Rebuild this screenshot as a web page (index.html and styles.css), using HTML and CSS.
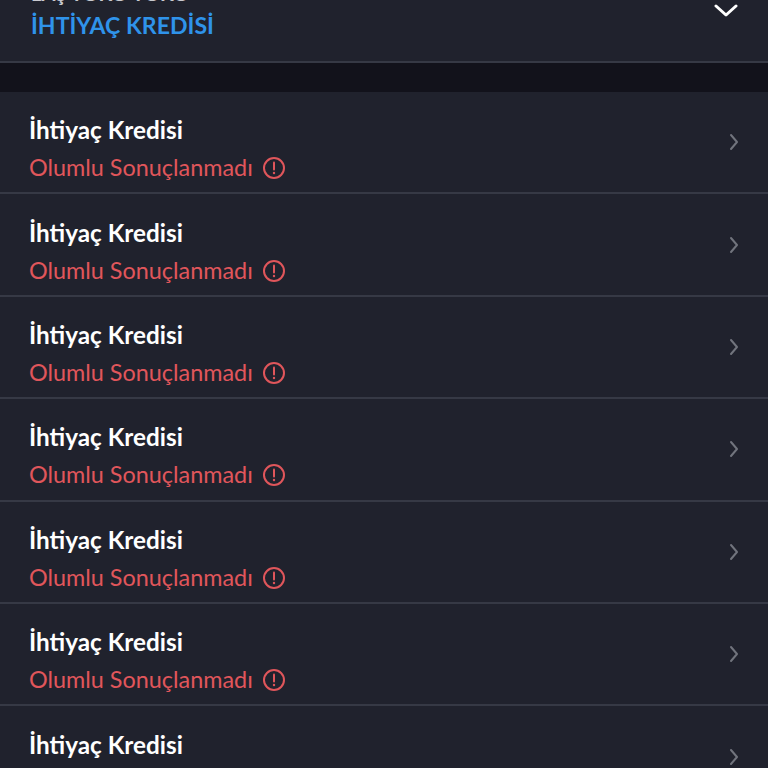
FILE: index.html
```html
<!DOCTYPE html>
<html lang="en">
<head>
  <meta charset="UTF-8">
  <title>Başvurularım</title>
  <link rel="stylesheet" href="styles.css">
</head>
<body>

<div class="screen">
  <div class="filter">
    <div class="filter-text">
      <div class="filter-label">LAŞ YOKO YOKO</div>
      <div class="filter-value">İHTİYAÇ KREDİSİ</div>
    </div>
    <svg class="filter-arrow" width="24" height="14" viewBox="0 0 24 14"><path d="M2 2l10 9 10-9" fill="none" stroke="#fff" stroke-width="3" stroke-linecap="round" stroke-linejoin="round"/></svg>
  </div>
  <div class="band"></div>

  <div class="row">
    <div class="row-text">
      <div class="row-title">İhtiyaç Kredisi</div>
      <div class="row-status">Olumlu Sonuçlanmadı
        <svg class="status-icon" width="24" height="24" viewBox="0 0 24 24"><circle cx="12" cy="12" r="10" fill="none" stroke="#e0565b" stroke-width="2"/><path d="M12 6.5v7" stroke="#e0565b" stroke-width="2" stroke-linecap="round"/><circle cx="12" cy="17" r="1.2" fill="#e0565b"/></svg>
      </div>
    </div>
    <svg class="chevron" width="10" height="18" viewBox="0 0 10 18"><path d="M2 2l6 7-6 7" fill="none" stroke="#71747d" stroke-width="2" stroke-linecap="round" stroke-linejoin="round"/></svg>
  </div>
  <div class="row">
    <div class="row-text">
      <div class="row-title">İhtiyaç Kredisi</div>
      <div class="row-status">Olumlu Sonuçlanmadı
        <svg class="status-icon" width="24" height="24" viewBox="0 0 24 24"><circle cx="12" cy="12" r="10" fill="none" stroke="#e0565b" stroke-width="2"/><path d="M12 6.5v7" stroke="#e0565b" stroke-width="2" stroke-linecap="round"/><circle cx="12" cy="17" r="1.2" fill="#e0565b"/></svg>
      </div>
    </div>
    <svg class="chevron" width="10" height="18" viewBox="0 0 10 18"><path d="M2 2l6 7-6 7" fill="none" stroke="#71747d" stroke-width="2" stroke-linecap="round" stroke-linejoin="round"/></svg>
  </div>
  <div class="row">
    <div class="row-text">
      <div class="row-title">İhtiyaç Kredisi</div>
      <div class="row-status">Olumlu Sonuçlanmadı
        <svg class="status-icon" width="24" height="24" viewBox="0 0 24 24"><circle cx="12" cy="12" r="10" fill="none" stroke="#e0565b" stroke-width="2"/><path d="M12 6.5v7" stroke="#e0565b" stroke-width="2" stroke-linecap="round"/><circle cx="12" cy="17" r="1.2" fill="#e0565b"/></svg>
      </div>
    </div>
    <svg class="chevron" width="10" height="18" viewBox="0 0 10 18"><path d="M2 2l6 7-6 7" fill="none" stroke="#71747d" stroke-width="2" stroke-linecap="round" stroke-linejoin="round"/></svg>
  </div>
  <div class="row">
    <div class="row-text">
      <div class="row-title">İhtiyaç Kredisi</div>
      <div class="row-status">Olumlu Sonuçlanmadı
        <svg class="status-icon" width="24" height="24" viewBox="0 0 24 24"><circle cx="12" cy="12" r="10" fill="none" stroke="#e0565b" stroke-width="2"/><path d="M12 6.5v7" stroke="#e0565b" stroke-width="2" stroke-linecap="round"/><circle cx="12" cy="17" r="1.2" fill="#e0565b"/></svg>
      </div>
    </div>
    <svg class="chevron" width="10" height="18" viewBox="0 0 10 18"><path d="M2 2l6 7-6 7" fill="none" stroke="#71747d" stroke-width="2" stroke-linecap="round" stroke-linejoin="round"/></svg>
  </div>
  <div class="row">
    <div class="row-text">
      <div class="row-title">İhtiyaç Kredisi</div>
      <div class="row-status">Olumlu Sonuçlanmadı
        <svg class="status-icon" width="24" height="24" viewBox="0 0 24 24"><circle cx="12" cy="12" r="10" fill="none" stroke="#e0565b" stroke-width="2"/><path d="M12 6.5v7" stroke="#e0565b" stroke-width="2" stroke-linecap="round"/><circle cx="12" cy="17" r="1.2" fill="#e0565b"/></svg>
      </div>
    </div>
    <svg class="chevron" width="10" height="18" viewBox="0 0 10 18"><path d="M2 2l6 7-6 7" fill="none" stroke="#71747d" stroke-width="2" stroke-linecap="round" stroke-linejoin="round"/></svg>
  </div>
  <div class="row">
    <div class="row-text">
      <div class="row-title">İhtiyaç Kredisi</div>
      <div class="row-status">Olumlu Sonuçlanmadı
        <svg class="status-icon" width="24" height="24" viewBox="0 0 24 24"><circle cx="12" cy="12" r="10" fill="none" stroke="#e0565b" stroke-width="2"/><path d="M12 6.5v7" stroke="#e0565b" stroke-width="2" stroke-linecap="round"/><circle cx="12" cy="17" r="1.2" fill="#e0565b"/></svg>
      </div>
    </div>
    <svg class="chevron" width="10" height="18" viewBox="0 0 10 18"><path d="M2 2l6 7-6 7" fill="none" stroke="#71747d" stroke-width="2" stroke-linecap="round" stroke-linejoin="round"/></svg>
  </div>
  <div class="row">
    <div class="row-text">
      <div class="row-title">İhtiyaç Kredisi</div>
      <div class="row-status">Olumlu Sonuçlanmadı
        <svg class="status-icon" width="24" height="24" viewBox="0 0 24 24"><circle cx="12" cy="12" r="10" fill="none" stroke="#e0565b" stroke-width="2"/><path d="M12 6.5v7" stroke="#e0565b" stroke-width="2" stroke-linecap="round"/><circle cx="12" cy="17" r="1.2" fill="#e0565b"/></svg>
      </div>
    </div>
    <svg class="chevron" width="10" height="18" viewBox="0 0 10 18"><path d="M2 2l6 7-6 7" fill="none" stroke="#71747d" stroke-width="2" stroke-linecap="round" stroke-linejoin="round"/></svg>
  </div>
</div>

</body>
</html>
```

FILE: styles.css
```css
html, body {
  margin: 0;
  height: 768px;
  overflow: hidden;
  background-color: #20222d;
}
.screen {
  margin-top: -30px;
  font-family: Lato, sans-serif;
}
.filter {
  display: flex;
  justify-content: space-between;
  align-items: flex-start;
  height: 93px;
  padding: 9px 30px 0 31px;
  box-sizing: border-box;
  border-bottom: 2px solid #363945;
}
.filter-label {
  color: #c9cad0;
  font-size: 20px;
  font-weight: 700;
  line-height: 28px;
  margin-bottom: 3px;
}
.filter-value {
  color: #2f93ea;
  font-size: 23.1px;
  font-weight: 700;
  line-height: 30px;
}
.filter-arrow {
  margin-top: 25px;
}
.band {
  height: 29px;
  background-color: #12121b;
}
.row {
  display: flex;
  justify-content: space-between;
  align-items: center;
  height: 102.4px;
  padding: 0 29px;
  box-sizing: border-box;
  border-bottom: 2px solid #363945;
}
.row-text {
  padding-top: 12px;
}
.row-title {
  color: #fff;
  font-size: 24.3px;
  font-weight: 700;
  line-height: 30px;
  margin-bottom: 8px;
}
.row-status {
  display: flex;
  align-items: center;
  gap: 9px;
  color: #e0565b;
  font-size: 23.4px;
  line-height: 28px;
}
.status-icon {
  margin-top: 2px;
}
```
